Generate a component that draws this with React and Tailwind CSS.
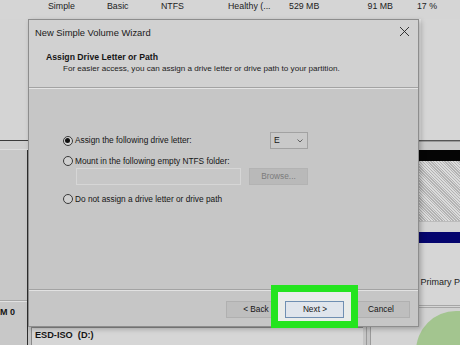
export default function App() {
  return (
    <div className="relative w-[460px] h-[345px] overflow-hidden bg-[#d5d5d5] text-[#151515] font-['Liberation_Sans',Arial,sans-serif]">
      {/* volume list row */}
      <div className="h-[19px] flex items-start pt-[1px] text-[8.8px] leading-[11px] text-[#222]">
        <span className="ml-[48px] w-[59px]">Simple</span>
        <span className="w-[54px]">Basic</span>
        <span className="w-[67px]">NTFS</span>
        <span className="w-[61px]">Healthy (...</span>
        <span className="w-[60px]">529 MB</span>
        <span className="w-[44px] text-right">91 MB</span>
        <span className="w-[44px] text-right">17 %</span>
      </div>

      <div className="flex h-[326px]">
        {/* left disk labels */}
        <div className="w-[28px] flex flex-col">
          <div className="h-[121px] bg-[#d4d4d4]" />
          <div className="h-px bg-[#3c3c3c]" />
          <div className="h-[9px] bg-[#cfcfcf] border-b border-[#dedede]" />
          <div className="flex-1 bg-[#c8c8c8] border-r border-[#2e2e2e] flex flex-col">
            <div className="h-[151px] border-b border-[#a9a9a9]" />
            <div className="flex-1 border-t border-[#e2e2e2] pt-[6px] text-[9px] font-bold leading-none">M 0</div>
          </div>
        </div>

        {/* center: dialog over the disk map */}
        <div className="w-[392px] flex flex-col">
          <div className="relative z-10 h-[308px] flex flex-col bg-[#c6c6c6] border border-[#8d8d8d] shadow-[2px_2px_5px_rgba(0,0,0,0.25)]">
            {/* title bar */}
            <div className="h-[25px] flex items-center justify-between bg-[#d1d1d1] pl-[6px] pr-[8px]">
              <span className="text-[9.4px] leading-none text-[#1a1a1a]">New Simple Volume Wizard</span>
              <svg width="11" height="11" viewBox="0 0 11 11" className="mt-[-2px]">
                <path d="M1 1 L10 10 M10 1 L1 10" stroke="#222" strokeWidth="0.9" fill="none" />
              </svg>
            </div>
            {/* header */}
            <div className="h-[43px] bg-[#d1d1d1] pl-[17px] pt-[7px] border-b border-[#a3a3a3]">
              <div className="text-[8.7px] font-bold leading-[11px]">Assign Drive Letter or Path</div>
              <div className="pl-[17px] mt-[1px] text-[8.1px] leading-[10px] text-[#1c1c1c]">
                For easier access, you can assign a drive letter or drive path to your partition.
              </div>
            </div>
            {/* body */}
            <div className="flex-1 border-t border-[#e4e4e4] border-b border-b-[#a3a3a3] pl-[34px] pt-[43px] text-[8.3px] leading-none">
              <div className="flex items-center h-[17px]">
                <div className="w-[207px] flex items-center">
                  <span className="w-[10px] h-[10px] rounded-full border border-[#3a3a3a] bg-[#d4d4d4] flex items-center justify-center">
                    <span className="w-[5px] h-[5px] rounded-full bg-[#111]" />
                  </span>
                  <span className="ml-[2px]">Assign the following drive letter:</span>
                </div>
                <div className="w-[38px] h-[17px] border border-[#a2a2a2] bg-[#c9c9c9] flex items-center justify-between pl-[3px] pr-[4px]">
                  <span className="text-[8.6px]">E</span>
                  <svg width="6" height="4" viewBox="0 0 6 4">
                    <path d="M0.5 0.5 L3 3 L5.5 0.5" stroke="#555" strokeWidth="0.9" fill="none" />
                  </svg>
                </div>
              </div>
              <div className="flex items-center h-[12px] mt-[6px]">
                <span className="w-[10px] h-[10px] rounded-full border border-[#3a3a3a] bg-[#d0d0d0]" />
                <span className="ml-[2px]">Mount in the following empty NTFS folder:</span>
              </div>
              <div className="flex h-[17px] mt-[1px] pl-[13px] gap-[8px]">
                <div className="w-[165px] border border-[#d6d6d6] bg-[#c7c7c7]" />
                <div className="w-[59px] bg-[#b9b9b9] border border-[#b3b3b3] flex items-center justify-center text-[#7b7b7b]">
                  Browse...
                </div>
              </div>
              <div className="flex items-center h-[12px] mt-[8px]">
                <span className="w-[10px] h-[10px] rounded-full border border-[#3a3a3a] bg-[#d0d0d0]" />
                <span className="ml-[2px]">Do not assign a drive letter or drive path</span>
              </div>
            </div>
            {/* footer */}
            <div className="h-[36px] border-t border-[#e2e2e2] flex justify-end items-start pt-[10px] pr-[8px] text-[8.3px] leading-none">
              <div className="w-[59px] h-[17px] bg-[#bebebe] border border-[#b0b0b0] flex items-center justify-center">
                &lt; Back
              </div>
              <div className="relative w-[59px] h-[17px] z-20">
                <div className="absolute left-[-14px] right-[-14px] top-[-16px] bottom-[-10px] border-[7px] border-[#24e41f] bg-[#e9ecea]" />
                <div className="relative w-full h-full bg-[#dfe5ec] border border-[#6f8fb2] flex items-center justify-center">
                  Next &gt;
                </div>
              </div>
              <div className="w-[59px] h-[17px] ml-[7px] bg-[#bebebe] border border-[#b0b0b0] flex items-center justify-center">
                Cancel
              </div>
            </div>
          </div>
          {/* disk map under dialog */}
          <div className="flex-1 flex bg-[#c4c4c4]">
            <div className="ml-[3px] w-[332px] border-l border-t border-[#8a8a8a] bg-[#d6d6d6] pl-[3px] pt-[3px] text-[9.2px] font-bold leading-none">
              ESD-ISO&nbsp;&nbsp;(D:)
            </div>
            <div className="ml-[3px] w-[1px] bg-[#9a9a9a]" />
            <div className="ml-[3px] flex-1 border-l border-[#9a9a9a] bg-[#d4d4d4]" />
          </div>
        </div>

        {/* right disk map */}
        <div className="relative flex-1 flex flex-col bg-[#d6d6d6]">
          <div className="h-[121px] border-l-2 border-[#e6e6e6]" />
          <div className="h-px bg-[#555]" />
          <div className="h-[9px] bg-[#c9c9c9] border-t border-[#9a9a9a]" />
          <div className="h-[11px] bg-[#050505]" />
          <div className="h-[60px] bg-[repeating-linear-gradient(45deg,#b3b3b3_0px,#b3b3b3_1px,#dcdcdc_1px,#dcdcdc_2px)]" />
          <div className="h-[11px] bg-[#d4d4d4] border-t border-[#bcbcbc]" />
          <div className="h-[11px] bg-[#05056e]" />
          <div className="h-[62px] bg-[#d6d6d6] flex items-end pb-[18px] pl-[1px] text-[9px] leading-none text-[#222] whitespace-nowrap">
            Primary P
          </div>
          <div className="h-[3px] border-t border-b border-[#a6a6a6]" />
          <div className="flex-1 bg-[#d2d2d2]" />
          <div className="absolute left-[-3px] top-[292px] w-[90px] h-[80px] rounded-tl-[40px] bg-[#a3c58f]" />
        </div>
      </div>
    </div>
  );
}
